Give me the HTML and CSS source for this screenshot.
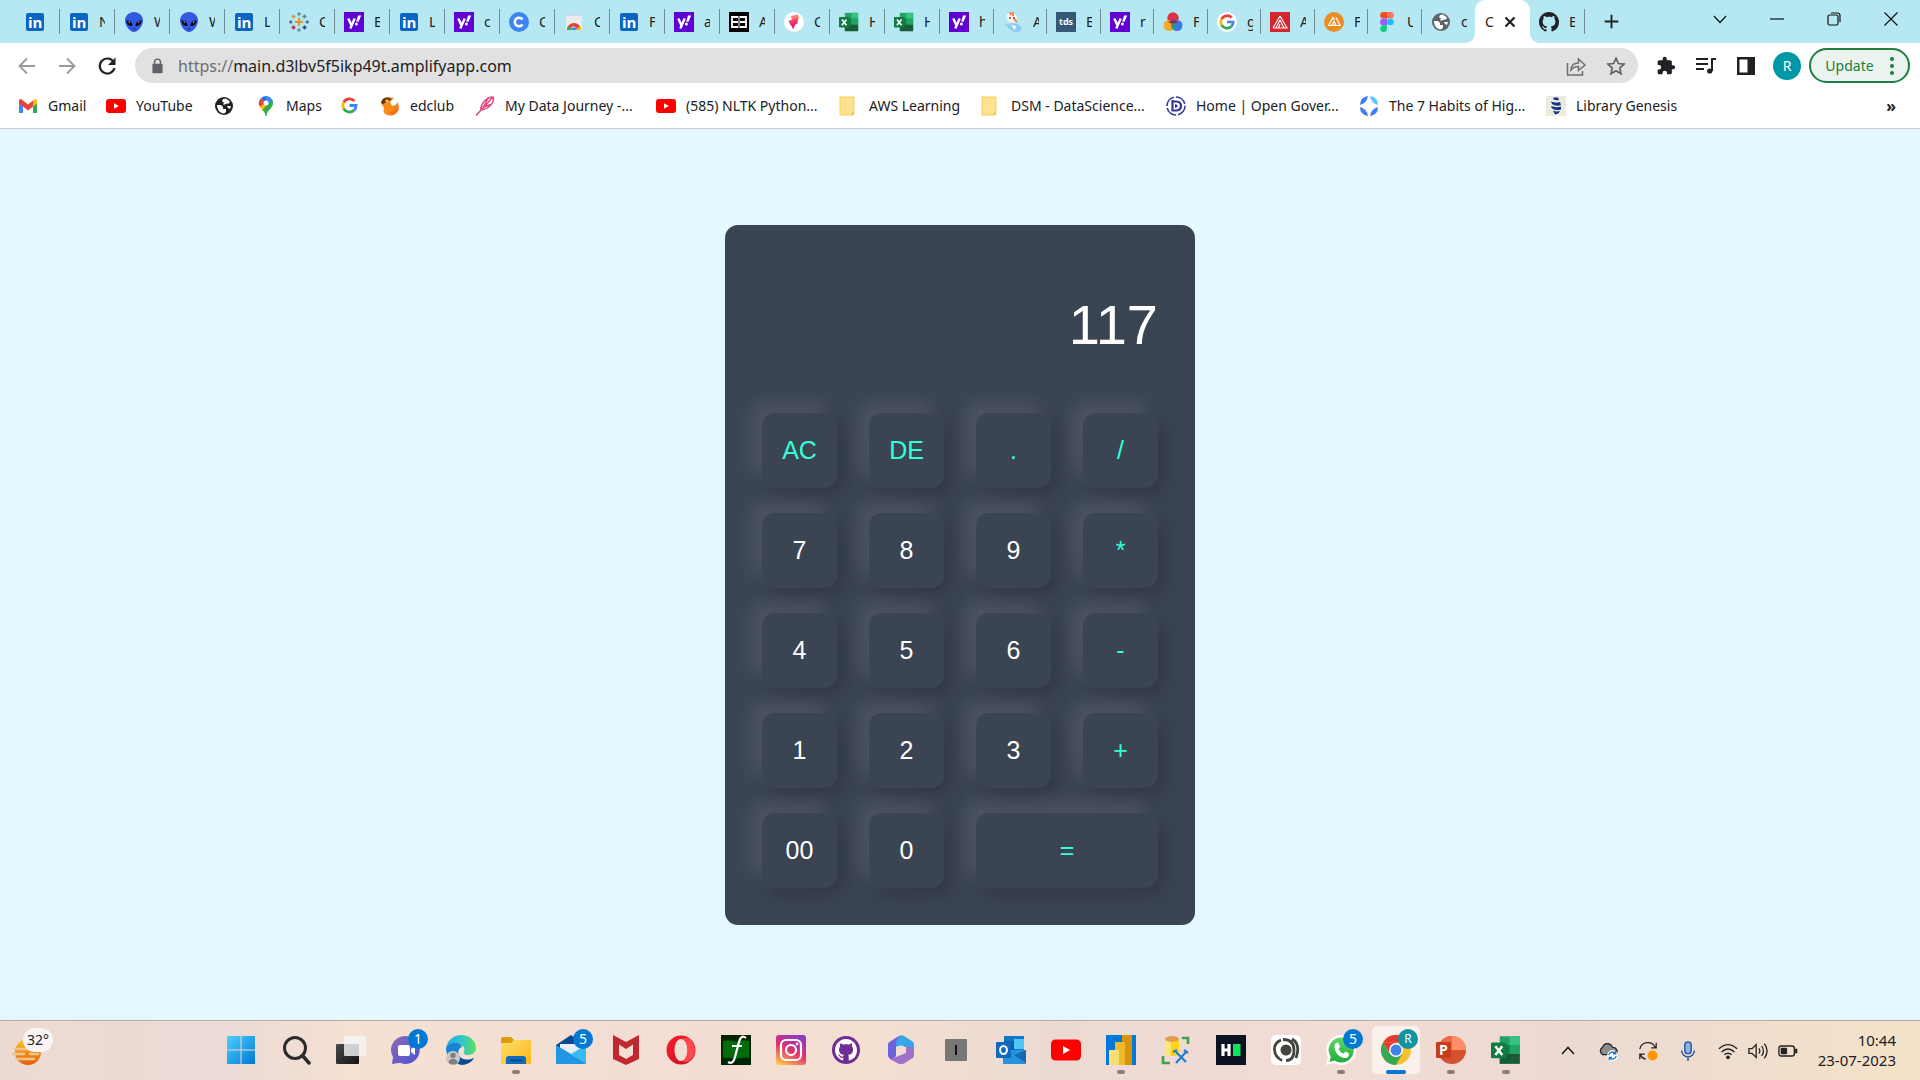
FILE: index.html
```html
<!DOCTYPE html>
<html lang="en">
<head>
<meta charset="utf-8">
<title>Calculator</title>
<link rel="stylesheet" href="styles.css">
</head>
<body>
<svg class="sprite" aria-hidden="true">
  <defs>
    <linearGradient id="sky" x1="0" y1="0" x2="1" y2="1"><stop offset="0" stop-color="#4cd0ff"/><stop offset="1" stop-color="#0078d4"/></linearGradient>
    <linearGradient id="violet" x1="0" y1="0" x2="1" y2="1"><stop offset="0" stop-color="#8c6bb8"/><stop offset="1" stop-color="#4a52d0"/></linearGradient>
    <linearGradient id="gold" x1="0" y1="0" x2="1" y2="1"><stop offset="0" stop-color="#ffdf6b"/><stop offset="1" stop-color="#fbb614"/></linearGradient>
    <linearGradient id="edge" x1="0" y1="0" x2="1" y2="0"><stop offset="0" stop-color="#2aa7e0"/><stop offset=".5" stop-color="#2fc3d0"/><stop offset="1" stop-color="#60e05a"/></linearGradient>
    <linearGradient id="insta" x1="0.7" y1="0" x2="0.2" y2="1"><stop offset="0" stop-color="#8a3ac8"/><stop offset=".5" stop-color="#e1306c"/><stop offset="1" stop-color="#fdc34b"/></linearGradient>
    <linearGradient id="opera" x1="0" y1="0" x2="1" y2="1"><stop offset="0" stop-color="#ff1b2d"/><stop offset="1" stop-color="#c4101c"/></linearGradient>
    <linearGradient id="sun" x1="0" y1="0" x2="0" y2="1"><stop offset="0" stop-color="#ffc928"/><stop offset="1" stop-color="#e8590c"/></linearGradient>
    <linearGradient id="wa" x1="0" y1="0" x2="0" y2="1"><stop offset="0" stop-color="#60d66a"/><stop offset="1" stop-color="#1faf38"/></linearGradient>
    <linearGradient id="dark" x1="0" y1="0" x2="1" y2="1"><stop offset="0" stop-color="#4a4a4a"/><stop offset="1" stop-color="#141414"/></linearGradient>
  </defs>
  <symbol id="linkedin" viewBox="0 0 20 20"><rect x="1" y="1" width="18" height="18" rx="2" fill="#0a66c2"/><text x="3" y="16" class="mark" font-size="15" fill="#fff">in</text></symbol>
  <symbol id="alien" viewBox="0 0 20 20"><path d="M10 0c5 0 9 4 9 8.500C19 14 14 20 10 20S1 14 1 8.500C1 4 5 0 10 0z" fill="#3358e4"/><path d="M2.500 8.500c3-.5 6 1.500 6 5.500-3.500.3-6-2-6-5.500zM17.500 8.500c-3-.5-6 1.500-6 5.500 3.500.3 6-2 6-5.500z" fill="#05060c"/><path d="M4.500 9.800l1.500.6M14 10.400l1.500-.6" stroke="#dde" stroke-width="1"/><path d="M8.500 17h3" stroke="#1a2a90"/></symbol>
  <symbol id="tableau" viewBox="0 0 20 20" fill="none" stroke-width="1.600"><path d="M10 6v8M6 10h8" stroke="#eb912c" stroke-width="2"/><path d="M10 0v4M8 2h4M10 16v4M8 18h4" stroke="#7099a6"/><path d="M0 10h3.500M1.700 8.200v3.600M16.500 10H20M18.300 8.200v3.600" stroke="#5b6591" stroke-width="1.300"/><path d="M4.500 2.500v4M2.500 4.500h4" stroke="#eb912c"/><path d="M15.500 2.500v4M13.500 4.500h4" stroke="#59879b"/><path d="M4.500 13.500v4M2.500 15.500h4" stroke="#c72035"/><path d="M15.500 13.500v4M13.500 15.500h4" stroke="#1f447e"/></symbol>
  <symbol id="yahoo" viewBox="0 0 20 20"><rect width="20" height="20" fill="#5f01d1"/><path d="M4.300 6.500l3 6.500M10.700 6.500L6.300 16.500" stroke="#fff" stroke-width="2.400" fill="none"/><path d="M14 3.500h3.200l-2.600 6.300h-2.400z" fill="#fff"/><circle cx="12.400" cy="12" r="1.500" fill="#fff"/></symbol>
  <symbol id="coursera" viewBox="0 0 20 20"><circle cx="10" cy="10" r="10" fill="#3c85f5"/><path d="M13.600 7.500A4.300 4.300 0 1 0 13.600 12.500" fill="none" stroke="#fff" stroke-width="2.600"/></symbol>
  <symbol id="store" viewBox="0 0 20 20"><path d="M7 4V2h6v2" fill="none" stroke="#cfd3d8" stroke-width="1.500"/><path d="M2 4h16v14H2z" fill="#e9ebee"/><path d="M3 18a7 7 0 0 1 14 0h-3l-4-4z" fill="#ea4335"/><path d="M3 18a7 7 0 0 1 1-4l5 4z" fill="#34a853"/><path d="M12 18l4-4a7 7 0 0 1 1 4z" fill="#fbbc05"/><path d="M7.300 18a2.700 2.700 0 0 1 5.400 0z" fill="#4285f4"/></symbol>
  <symbol id="e3" viewBox="0 0 20 20"><rect width="20" height="20" fill="#000"/><path d="M9 5H3v10h6M3 10h6M11 5h6v10h-6M11 10h6" stroke="#fff" stroke-width="1.800" fill="none"/><path d="M10 4v12" stroke="#fff" stroke-width="1"/></symbol>
  <symbol id="flame" viewBox="0 0 20 20"><circle cx="10" cy="10" r="10" fill="#fff"/><path d="M7 4l7-1.500 1 4L8 9z" fill="#ff7f6e"/><path d="M4.500 9L14 6l-.5 5.500L7 14z" fill="#f2366e"/><path d="M7 12l5-1-3 6.500z" fill="#e31c79"/></symbol>
  <symbol id="excel" viewBox="0 0 24 24"><path d="M7 1h16v22H7z" fill="#21a366"/><path d="M15 1h8v7h-8z" fill="#33c481"/><path d="M7 8h8v7H7z" fill="#107c41"/><path d="M7 15h16v8H7z" fill="#185c37"/><path d="M15 8h8v7h-8z" fill="#21a366"/><rect y="6" width="12.500" height="12.500" rx="1" fill="#107c41"/><path d="M3.500 9l5.500 7M9 9l-5.500 7" stroke="#fff" stroke-width="2"/></symbol>
  <symbol id="cartoon" viewBox="0 0 20 20"><path d="M1 11l4 2 3-2 7 1 4 4-3 4h-5l-5-3z" fill="#8ccdf2"/><path d="M3 3l3-2 2 2 3-2 3 3-1 6-4 1-4-2z" fill="#f7f3ea"/><path d="M7 0l1 3M10 0v4M11 7l3 3" stroke="#ee6b2f" stroke-width="1.500"/><circle cx="7" cy="6" r="1" fill="#a33"/><circle cx="11" cy="6" r="1" fill="#a33"/><path d="M8 13l5 1-1 4z" fill="#fff"/></symbol>
  <symbol id="tds" viewBox="0 0 20 20"><rect width="20" height="20" fill="#355876"/><text x="3" y="13" class="mark" font-size="9" fill="#fff">tds</text></symbol>
  <symbol id="balls" viewBox="0 0 20 20"><circle cx="10" cy="6" r="5.700" fill="#d8334a"/><circle cx="6.200" cy="13.500" r="5.500" fill="#f7a928"/><circle cx="14" cy="13.500" r="5.500" fill="#3b78e7"/><path d="M10 9.500a5.500 5.500 0 0 1 0 8 5.500 5.500 0 0 1 0-8z" fill="#2f9e50"/><path d="M5 10q5-4 10 0-5 3-10 0" fill="#8a2c5c"/></symbol>
  <symbol id="google" viewBox="0 0 20 20" fill="none" stroke-width="3.400"><path d="M15.800 4.600A7.800 7.800 0 0 0 3.200 6.400" stroke="#ea4335"/><path d="M3.200 6.400a7.800 7.800 0 0 0 0 7.200" stroke="#fbbc05"/><path d="M3.200 13.600a7.800 7.800 0 0 0 12 2.200" stroke="#34a853"/><path d="M15.200 15.800A7.800 7.800 0 0 0 17.700 10H10" stroke="#4285f4"/></symbol>
  <symbol id="googledisc" viewBox="0 0 20 20"><circle cx="10" cy="10" r="10" fill="#fff"/><use href="#google" x="2" y="2" width="16" height="16"/></symbol>
  <symbol id="redtri" viewBox="0 0 20 20"><rect width="20" height="20" fill="#d4262e"/><path d="M10 4L3 16M10 4l7 12H3M10 8l-4 8M10 8l4 8M10 12l-1.500 4" stroke="#fff" stroke-width="1.100" fill="none"/></symbol>
  <symbol id="amplify" viewBox="0 0 20 20"><circle cx="10" cy="10" r="10" fill="#ee8d24"/><path d="M4.500 13.500l4.500-8 1.500 2.500M12 5.500l4 8H4.500M8 13l2-3.500 2 3.500z" stroke="#fff" stroke-width="1.200" fill="none"/></symbol>
  <symbol id="figma" viewBox="0 0 20 20"><path d="M6.500 0H10v6.600H6.500a3.300 3.300 0 0 1 0-6.600z" fill="#f24e1e"/><path d="M10 0h3.500a3.300 3.300 0 0 1 0 6.600H10z" fill="#ff7262"/><path d="M6.500 6.600H10v6.700H6.500a3.300 3.300 0 0 1 0-6.700z" fill="#a259ff"/><circle cx="13.400" cy="10" r="3.300" fill="#1abcfe"/><path d="M6.500 13.300H10v3.300a3.400 3.400 0 1 1-3.500-3.300z" fill="#0acf83"/></symbol>
  <symbol id="globe" viewBox="0 0 20 20"><circle cx="10" cy="10" r="9" fill="currentColor"/><path d="M3 9h4l2 2v2h3v3l-2 1.500C6 17 3 14 3 9zM9 3l3-.5 4 3-1 2h-2l-2 1H9l1-2-2-1zM13 10h4l-1 3-2-1z" class="land"/></symbol>
  <symbol id="github" viewBox="0 0 16 16"><path fill="currentColor" d="M8 0C3.580 0 0 3.580 0 8c0 3.540 2.290 6.530 5.470 7.590.4.070.55-.17.55-.38 0-.19-.01-.82-.01-1.490-2.010.37-2.530-.49-2.690-.94-.09-.23-.48-.94-.82-1.130-.28-.15-.68-.52-.01-.53.63-.01 1.080.58 1.230.82.72 1.210 1.870.87 2.330.66.07-.52.28-.87.51-1.070-1.780-.2-3.640-.89-3.640-3.950 0-.87.31-1.590.82-2.150-.08-.2-.36-1.020.08-2.120 0 0 .67-.21 2.200.82.64-.18 1.320-.27 2-.27s1.360.09 2 .27c1.530-1.040 2.200-.82 2.200-.82.44 1.100.16 1.920.08 2.120.51.56.82 1.270.82 2.150 0 3.070-1.870 3.750-3.650 3.950.29.25.54.73.54 1.480 0 1.070-.01 1.930-.01 2.200 0 .21.15.46.55.38A8.010 8.010 0 0 0 16 8c0-4.420-3.580-8-8-8z"/></symbol>
  <symbol id="cross" viewBox="0 0 20 20"><path d="M5.500 5.500l9 9M14.500 5.500l-9 9" stroke="currentColor" stroke-width="2.200"/></symbol>
  <symbol id="plus" viewBox="0 0 20 20"><path d="M10 2v16M2 10h16" stroke="currentColor" stroke-width="2.200"/></symbol>
  <symbol id="back" viewBox="0 0 20 20" fill="none" stroke="#9a9a9a" stroke-width="1.800"><path d="M18 10H3M10 2.500L2.500 10l7.500 7.500"/></symbol>
  <symbol id="forward" viewBox="0 0 20 20" fill="none" stroke="#9a9a9a" stroke-width="1.800"><path d="M2 10h15M10 2.500l7.500 7.500-7.500 7.500"/></symbol>
  <symbol id="reload" viewBox="0 0 20 20"><path d="M16.500 5.800A7.500 7.500 0 1 0 17.500 12" fill="none" stroke="#202124" stroke-width="2.200"/><path d="M18.500 1.500V9H11z" fill="#202124"/></symbol>
  <symbol id="lock" viewBox="0 0 20 20"><rect x="4" y="8" width="12" height="11" rx="1" fill="#5f6368"/><path d="M6.500 9V6a3.500 3.500 0 0 1 7 0v3" fill="none" stroke="#5f6368" stroke-width="1.700"/></symbol>
  <symbol id="share" viewBox="0 0 20 20" fill="none" stroke="#6b6e72" stroke-width="1.500"><path d="M1.500 7v12h15v-4M5 14c.3-5 3-7 7.500-7V3l6.500 6-6.500 5.500v-4C9 10.500 7 11.500 5 14z"/></symbol>
  <symbol id="star" viewBox="0 0 20 20" fill="none" stroke="#5f6368" stroke-width="1.700"><path d="M10 2.200l2.400 5.300 5.700.6-4.300 3.900 1.200 5.700-5-2.900-5 2.900L6.200 12 1.900 8.100l5.700-.6z"/></symbol>
  <symbol id="puzzle" viewBox="0 0 24 24"><path fill="#202124" d="M20.500 11H19V7c0-1.100-.9-2-2-2h-4V3.500a2.500 2.500 0 0 0-5 0V5H4c-1.100 0-2 .9-2 2v3.800h1.500a2.700 2.700 0 0 1 0 5.400H2V20c0 1.100.9 2 2 2h3.800v-1.500a2.700 2.700 0 0 1 5.400 0V22H17c1.100 0 2-.9 2-2v-4h1.500a2.500 2.500 0 0 0 0-5z"/></symbol>
  <symbol id="playlist" viewBox="0 0 20 20" fill="none" stroke="#202124" stroke-width="2"><path d="M0 3h12M0 8h12M0 13h8M20 3h-4v12"/><circle cx="13.700" cy="15" r="2.600" fill="#202124" stroke="none"/></symbol>
  <symbol id="panel" viewBox="0 0 20 20"><path d="M1 1h18v18H1z" fill="#202124"/><path d="M3.500 3.500h8v13h-8z" fill="#fff"/></symbol>
  <symbol id="winmax" viewBox="0 0 14 14" fill="none" stroke="#111" stroke-width="1.200"><rect x="1" y="3" width="10" height="10" rx="1.500"/><path d="M4 1h6.500A2.500 2.500 0 0 1 13 3.500V10"/></symbol>
  <symbol id="winmin" viewBox="0 0 14 14"><path d="M0 7h14" stroke="#111" stroke-width="1.200"/></symbol>
  <symbol id="winclose" viewBox="0 0 14 14"><path d="M.5.5l13 13M13.500.5l-13 13" stroke="#111" stroke-width="1.200"/></symbol>
  <symbol id="chevdown" viewBox="0 0 14 14"><path d="M1 4l6 6.500L13 4" stroke="#111" stroke-width="1.200" fill="none"/></symbol>
  <symbol id="chevup" viewBox="0 0 14 14"><path d="M1 10l6-6.500L13 10" stroke="#222" stroke-width="1.600" fill="none"/></symbol>
  <symbol id="gmail" viewBox="0 0 20 20"><path d="M1 4.500v12.500h4V8.500z" fill="#4285f4"/><path d="M19 4.500v12.500h-4V8.500z" fill="#34a853"/><path d="M15 4.500l2-1.500q2 0 2 2v2.500l-4 3z" fill="#fbbc04"/><path d="M1 5q0-2 2-2l7 5.500L15 4.500v6l-5 4-5-4L1 7.500z" fill="#ea4335"/></symbol>
  <symbol id="youtube" viewBox="0 0 20 20"><rect y="3" width="20" height="14" rx="3" fill="#f00"/><path d="M8 7.300v5.400l4.800-2.700z" fill="#fff"/></symbol>
  <symbol id="maps" viewBox="0 0 20 20"><path d="M10 0a7 7 0 0 1 7 7H10z" fill="#4285f4"/><path d="M10 0a7 7 0 0 0-5.500 2.700L10 7z" fill="#1a73e8"/><path d="M4.500 2.700A7 7 0 0 0 4 11l6-4z" fill="#ea4335"/><path d="M4 10.500l6-3.500 2 3-5.300 5z" fill="#fbbc04"/><path d="M17 7c0 6-6 6-6.500 13h-1C9.400 17 8 15.500 6.500 14L12 7.500l4-4A7 7 0 0 1 17 7z" fill="#34a853"/><circle cx="10" cy="7" r="2.500" fill="#fff"/></symbol>
  <symbol id="edclub" viewBox="0 0 20 20"><path d="M1 7Q2 1 8 1l6 1-4 4 2 4q6-1 5-5 5 10-3 14-6 2-10-2-1-2 0-5z" fill="#f98a1c"/><path d="M1 7Q2 2 7 1.500L12 3 9 5 3 8z" fill="#5a351a"/><circle cx="7" cy="5" r="1.800" fill="#ffb03a"/><path d="M9 16q6 0 8-6 2 6-4 9z" fill="#fb6a1a"/></symbol>
  <symbol id="feather" viewBox="0 0 20 20" fill="none" stroke="#e8467c" stroke-width="1.500"><path d="M1 19.500L18 1M6 14C5 8 12 1 18 1c2 4-3 12-12 13zM8 12l5-10M9 11l8-3"/></symbol>
  <symbol id="note" viewBox="0 0 20 20"><path d="M1 1h14v13l-1 5H1z" fill="#fde293" stroke="#f9cf4f"/><path d="M12 19l3-5v4q-1 1-3 1z" fill="#f6bf26"/></symbol>
  <symbol id="dgov" viewBox="0 0 20 20"><circle cx="10" cy="10" r="9" fill="none" stroke="#35379b" stroke-width="1.600" stroke-dasharray="12 2"/><path d="M5.500 5h1v10M6.500 5.500h4q4.500.5 4.500 4.500t-4.500 4.500h-4z" fill="none" stroke="#35379b" stroke-width="2.200"/><path d="M9 8v4l2.500-1V9z" fill="#35379b"/></symbol>
  <symbol id="habits" viewBox="0 0 20 20"><path d="M9 0Q8 7 1 9q0-8 8-9zM11 20q1-7 8-9 0 8-8 9zM1 11q7 2 8 9-8-1-8-9z" fill="#3f7dfa"/><path d="M11 0q1 7 8 9 0-8-8-9z" fill="#5ec3ff"/></symbol>
  <symbol id="libgen" viewBox="0 0 20 20"><rect width="20" height="20" fill="#ecebdd"/><path d="M8 1.500h4l1 2.500q-3 1-6-1zM5 5.500q5 2 9 0.500l1 3q-5 2-9-1zM5 10q5 2 10 .5v3q-5 1.500-9-1zM7 14.500q3 1.500 7 .5-1 3-5 3.500z" fill="#12358b"/></symbol>
  <symbol id="weather" viewBox="0 0 30 30"><circle cx="16" cy="16" r="13" fill="url(#sun)"/><path d="M3 13h16M1 18h11M18 18h8M4 23h18" stroke="#e9c690" stroke-width="2.400" stroke-linecap="round"/></symbol>
  <symbol id="windows" viewBox="0 0 30 30"><path d="M1 1h13.500v13.500H1zM15.500 1H29v13.500H15.500zM1 15.500h13.500V29H1zM15.500 15.500H29V29H15.500z" fill="url(#sky)"/></symbol>
  <symbol id="search" viewBox="0 0 30 30" fill="none" stroke="#2b2b2b"><circle cx="14" cy="13" r="10.500" stroke-width="3"/><path d="M21.500 20.500l6.500 7.500" stroke-width="3.500" stroke-linecap="round"/></symbol>
  <symbol id="taskview" viewBox="0 0 30 30"><rect y="9" width="23" height="20" rx="1" fill="url(#dark)"/><rect x="8" y="1" width="22" height="20" rx="1" fill="#f4f4f4" opacity=".82"/></symbol>
  <symbol id="chat" viewBox="0 0 30 30"><path d="M15 1a14 14 0 1 1-6 26.800L1 29l1-7A14 14 0 0 1 15 1z" fill="url(#violet)"/><rect x="7" y="10" width="12" height="11" rx="2" fill="#fff"/><path d="M20 14l4-3v9l-4-3z" fill="#fff"/></symbol>
  <symbol id="edgeicon" viewBox="0 0 30 30"><path d="M0 14C1 5 8 0 15 0c9 0 15 6 15 13 0 5-4 7-8 7-3 0-5-1-4-3 3-7-8-12-18-3z" fill="url(#edge)"/><path d="M0 13c4-7 15-6 16-1-4 1-6 8 0 12 5 3 10 0 12-1-4 6-13 8-20 4-6-4-8-9-8-14z" fill="#1683d4"/><path d="M12 16c-1 7 8 11 16 7-2 4-7 7-13 7-7-2-8-9-3-14z" fill="#0d4a92"/><circle cx="7" cy="23" r="7" fill="#c9c9c9"/><circle cx="7" cy="20.500" r="2.700" fill="#7e7e7e"/><path d="M2.500 28q0-4 4.500-4t4.500 4q-4 3-9 0z" fill="#7e7e7e"/></symbol>
  <symbol id="explorer" viewBox="0 0 30 30"><path d="M0 4q0-2 2-2h8l3 3-2 4H0z" fill="#dd9b0c"/><path d="M0 8h10l3-3h17v24H0z" fill="url(#gold)"/><path d="M5 29v-5q0-3 3-3h14q3 0 3 3v5z" fill="#0f6cbd"/><path d="M9 25.500h12" stroke="#063f73" stroke-width="1.500"/></symbol>
  <symbol id="mail" viewBox="0 0 30 30"><path d="M0 10L15 0l15 10v6H0z" fill="#0b4a8f"/><path d="M4 9h22v12H4z" fill="#e8eef4"/><path d="M0 10l30 18q0 1-1 1H1q-1 0-1-1z" fill="#1f97e4"/><path d="M30 10v18L15 19z" fill="#35bdf2"/></symbol>
  <symbol id="mcafee" viewBox="0 0 30 30"><path d="M2 0l13 7L28 0v24l-13 6-13-6zM8 9.500V20l7 4 7-4V9.500L15 14z" fill="#c0282f" fill-rule="evenodd"/></symbol>
  <symbol id="operaicon" viewBox="0 0 30 30"><path fill-rule="evenodd" d="M15 .5a14.500 14.500 0 1 1 0 29 14.500 14.500 0 0 1 0-29zm0 3.500c-4 0-6.500 5-6.500 11S11 26 15 26s6.500-5 6.500-11S19 4 15 4z" fill="url(#opera)"/><path d="M15 4c8-4 14 4 14 11s-6 15-14 11c4 0 6.500-5 6.500-11S19 4 15 4z" fill="#ff4a4d"/></symbol>
  <symbol id="ffile" viewBox="0 0 30 30"><rect width="30" height="30" fill="#012401"/><path d="M2 6q7-2 13 1 6-3 13-1v17q-7-1-13 1-6-2-13-1z" fill="#046b0b"/><path d="M25 3q-5-4-7 4l-4 15q-2 8-7 5M11 11h10" stroke="#fff" stroke-width="2.200" fill="none"/></symbol>
  <symbol id="instagram" viewBox="0 0 30 30"><rect width="30" height="30" rx="3" fill="url(#insta)"/><g fill="none" stroke="#fff" stroke-width="2.200"><rect x="5" y="5" width="20" height="20" rx="5"/><circle cx="15" cy="15" r="5"/></g><circle cx="21" cy="9" r="1.400" fill="#fff"/></symbol>
  <symbol id="ghpurple" viewBox="0 0 30 30"><circle cx="15" cy="15" r="14" fill="#6e2d96"/><circle cx="15" cy="15" r="10.500" fill="#6e2d96"/><g color="#fff"><use href="#github" x="4" y="4" width="22" height="22"/></g></symbol>
  <symbol id="m365" viewBox="0 0 30 30"><path d="M13 1q3-1 5 0l-5 8-3 3v9l-4 4q-4-2-4-5V10q0-3 3-4z" fill="#6c62d9"/><path d="M13 1q2-1 5 0l8 5q2 1 2 4v8l-8-3v-3l-10-1V7z" fill="#35a6e6"/><path d="M28 14v6q0 3-3 4l-7 4.500q-3 1-6 0L4 24l6-2 10-4v-7z" fill="#a070c8"/><circle cx="15" cy="15" r="4.500" fill="#f0dcd4"/></symbol>
  <symbol id="ibox" viewBox="0 0 30 30"><rect x="4" y="4" width="22" height="22" rx="1" fill="#777"/><path d="M15 10v10" stroke="#111" stroke-width="2"/></symbol>
  <symbol id="outlook" viewBox="0 0 30 30"><path d="M8 1h20v18H8z" fill="#1377c9"/><path d="M18 4h10v10H18z" fill="#50c8f4"/><path d="M8 6h10v9H8z" fill="#0f5fb0"/><path d="M7 15l23 0v14H7z" fill="#2593df"/><path d="M30 15v13L18 20z" fill="#1667b4"/><rect y="7" width="15" height="16" rx="1" fill="#0f69bd"/><ellipse cx="7.500" cy="15" rx="3.400" ry="4" fill="none" stroke="#fff" stroke-width="2"/></symbol>
  <symbol id="powerbi" viewBox="0 0 30 30"><rect width="30" height="30" fill="#0078d7"/><path d="M16 0h10v30H16z" fill="#d8940f"/><path d="M9 8q0-1 1-1h9v23H9z" fill="#eebb2c"/><path d="M3 16q0-1 1-1h9v15H3z" fill="#f9de76"/></symbol>
  <symbol id="dbtools" viewBox="0 0 30 30"><path d="M4 4v14q0 3 7 3t7-3V4z" fill="#ffd21c"/><path d="M4 4h6v17q-6 0-6-3z" fill="#ffe574"/><ellipse cx="11" cy="4" rx="7" ry="3" fill="#e3a055"/><path d="M21 3h6v6M2 21v7h7" stroke="#43a047" stroke-width="2.600" fill="none"/><path d="M15 17l10 10M15 28l10-11M12 17l4-2M23 15l4 3" stroke="#1d7fd0" stroke-width="2.200" fill="none"/></symbol>
  <symbol id="hblock" viewBox="0 0 30 30"><rect width="30" height="30" fill="#0b1220"/><path d="M7 9v12M13 9v12M7 15h6" stroke="#fff" stroke-width="3.200"/><path d="M17 9h7.500v12H17z" fill="#0be45d"/></symbol>
  <symbol id="ring" viewBox="0 0 30 30"><rect width="30" height="30" rx="5" fill="#fff"/><circle cx="15" cy="15" r="5.500" fill="#46443f"/><path d="M10 5Q3 8 3.500 15T11 25.500M12 4.500q11 0 11 10.500T15 25.500M21 4q9 5 4 19" fill="none" stroke="#46443f" stroke-width="2.800"/></symbol>
  <symbol id="whatsapp" viewBox="0 0 30 30"><path d="M15 0a15 15 0 1 1-7 28L0 30l2-8A15 15 0 0 1 15 0z" fill="#fff"/><path d="M15 2.500A12.500 12.500 0 1 1 8.500 25.500L3.500 27l1.300-5A12.500 12.500 0 0 1 15 2.500z" fill="url(#wa)"/><path d="M9 9q2-3 4 0l1 3-1.500 2q2 4 5 4.500l2-2 3.500 2q0 5-5 4.500C12 22 7 15 9 9z" fill="#fff"/></symbol>
  <symbol id="chrome" viewBox="0 0 30 30"><circle cx="15" cy="15" r="15" fill="#fbc02d"/><path d="M2 7.500A15 15 0 0 1 28 7.500H15z" fill="#e53935"/><path d="M2 7.500A15 15 0 0 0 15 30l6.500-11.500L8 18z" fill="#34a853"/><path d="M2 7.500L9 19l6-11.500z" fill="#e53935"/><circle cx="15" cy="15" r="7" fill="#fff"/><circle cx="15" cy="15" r="5.500" fill="#3f83f0"/></symbol>
  <symbol id="ppt" viewBox="0 0 30 30"><circle cx="16" cy="15" r="14" fill="#d35230"/><path d="M16 1a14 14 0 0 1 14 14H16z" fill="#ff8f6b"/><path d="M16 1v14H2A14 14 0 0 1 16 1z" fill="#ed6c47"/><rect y="7" width="15" height="16" rx="1" fill="#c43e1c"/><text x="3" y="20" class="mark" font-size="14" fill="#fff">P</text></symbol>
  <symbol id="cloud" viewBox="0 0 22 22"><path d="M5 15a4.500 4.500 0 0 1 0-8Q7 2 11.500 3 15 4 16 7q4 0 5 4 0 3-3 4z" fill="#8c8c8c" stroke="#222" stroke-width="1.400"/><circle cx="16" cy="16" r="6" fill="#fff"/><path d="M12 15.500a4 4 0 0 1 7-2M20 16.500a4 4 0 0 1-7 2M19.500 11v3h-3M12.500 21v-3h3" fill="none" stroke="#1971c2" stroke-width="1.500"/></symbol>
  <symbol id="sync" viewBox="0 0 22 22"><path d="M2 9a9 9 0 0 1 17-2M20 2v5.500h-5.500M2 20v-5.500h5.500M2.500 15a9 9 0 0 0 6 5" fill="none" stroke="#222" stroke-width="1.400"/><circle cx="16" cy="16" r="5.500" fill="#ff9500"/></symbol>
  <symbol id="mic" viewBox="0 0 22 22" fill="none" stroke="#1d4f9c" stroke-width="1.500"><rect x="7.500" y="1" width="7" height="13" rx="3.500" fill="#8bb4e6"/><path d="M4 10.500a7 7 0 0 0 14 0M11 17.500V22"/></symbol>
  <symbol id="wifi" viewBox="0 0 22 22" fill="none" stroke="#222" stroke-width="1.500"><path d="M1 8.500q10-9 20 0M4 12q7-6.500 14 0M7 15.200q4-3.600 8 0"/><circle cx="11" cy="18" r="1.300" fill="#222"/></symbol>
  <symbol id="volume" viewBox="0 0 22 22" fill="none" stroke="#222" stroke-width="1.400"><path d="M1 8.500h3.500L9 4v14l-4.500-4.500H1zM12 8q2 3 0 6M15 5.500q4 5.500 0 11M18 3q6 8 0 16"/></symbol>
  <symbol id="battery" viewBox="0 0 22 22"><rect x="1" y="5.500" width="17" height="11" rx="2.500" fill="none" stroke="#222" stroke-width="1.500"/><rect x="3" y="7.500" width="7" height="7" rx="1" fill="#222"/><path d="M20 8.500v5" stroke="#222" stroke-width="2.400"/></symbol>
</svg>

<header class="browser">
  <div class="tabstrip">
    <nav class="tabs" aria-label="Open tabs">
      <button class="tab first"><svg class="icon"><use href="#linkedin"/></svg></button>
      <button class="tab"><svg class="icon"><use href="#linkedin"/></svg><span>N</span></button>
      <button class="tab"><svg class="icon"><use href="#alien"/></svg><span>W</span></button>
      <button class="tab"><svg class="icon"><use href="#alien"/></svg><span>W</span></button>
      <button class="tab"><svg class="icon"><use href="#linkedin"/></svg><span>L</span></button>
      <button class="tab"><svg class="icon"><use href="#tableau"/></svg><span>C</span></button>
      <button class="tab"><svg class="icon"><use href="#yahoo"/></svg><span>E</span></button>
      <button class="tab"><svg class="icon"><use href="#linkedin"/></svg><span>L</span></button>
      <button class="tab"><svg class="icon"><use href="#yahoo"/></svg><span>c</span></button>
      <button class="tab"><svg class="icon"><use href="#coursera"/></svg><span>C</span></button>
      <button class="tab"><svg class="icon"><use href="#store"/></svg><span>C</span></button>
      <button class="tab"><svg class="icon"><use href="#linkedin"/></svg><span>F</span></button>
      <button class="tab"><svg class="icon"><use href="#yahoo"/></svg><span>a</span></button>
      <button class="tab"><svg class="icon"><use href="#e3"/></svg><span>A</span></button>
      <button class="tab"><svg class="icon"><use href="#flame"/></svg><span>C</span></button>
      <button class="tab"><svg class="icon"><use href="#excel"/></svg><span>H</span></button>
      <button class="tab"><svg class="icon"><use href="#excel"/></svg><span>H</span></button>
      <button class="tab late"><svg class="icon"><use href="#yahoo"/></svg><span>h</span></button>
      <button class="tab late"><svg class="icon"><use href="#cartoon"/></svg><span>A</span></button>
      <button class="tab late"><svg class="icon"><use href="#tds"/></svg><span>E</span></button>
      <button class="tab late"><svg class="icon"><use href="#yahoo"/></svg><span>r</span></button>
      <button class="tab late"><svg class="icon"><use href="#balls"/></svg><span>F</span></button>
      <button class="tab late"><svg class="icon"><use href="#googledisc"/></svg><span>g</span></button>
      <button class="tab late"><svg class="icon"><use href="#redtri"/></svg><span>A</span></button>
      <button class="tab late"><svg class="icon"><use href="#amplify"/></svg><span>F</span></button>
      <button class="tab late"><svg class="icon"><use href="#figma"/></svg><span>U</span></button>
      <button class="tab late bare"><svg class="icon globe-tab"><use href="#globe"/></svg><span>c</span></button>
      <button class="tab active"><span>C</span><svg class="icon"><use href="#cross"/></svg></button>
      <button class="tab"><svg class="icon"><use href="#github"/></svg><span>E</span></button>
    </nav>
    <button class="newtab" aria-label="New tab"><svg class="icon small"><use href="#plus"/></svg></button>
    <div class="window-controls">
      <button aria-label="Search tabs"><svg class="glyph"><use href="#chevdown"/></svg></button>
      <button aria-label="Minimize"><svg class="glyph"><use href="#winmin"/></svg></button>
      <button aria-label="Restore"><svg class="glyph"><use href="#winmax"/></svg></button>
      <button aria-label="Close"><svg class="glyph"><use href="#winclose"/></svg></button>
    </div>
  </div>
  <div class="toolbar">
    <button aria-label="Back"><svg class="icon"><use href="#back"/></svg></button>
    <button aria-label="Forward"><svg class="icon"><use href="#forward"/></svg></button>
    <button aria-label="Reload"><svg class="icon"><use href="#reload"/></svg></button>
    <div class="omnibox">
      <svg class="icon small"><use href="#lock"/></svg>
      <label for="url">https://</label><input id="url" type="text" value="main.d3lbv5f5ikp49t.amplifyapp.com" spellcheck="false">
      <button aria-label="Share"><svg class="icon"><use href="#share"/></svg></button>
      <button aria-label="Bookmark"><svg class="icon"><use href="#star"/></svg></button>
    </div>
    <button aria-label="Extensions"><svg class="icon"><use href="#puzzle"/></svg></button>
    <button aria-label="Media"><svg class="icon"><use href="#playlist"/></svg></button>
    <button aria-label="Side panel"><svg class="icon"><use href="#panel"/></svg></button>
    <button class="avatar">R</button>
    <button class="update">Update<span class="dots"><i></i><i></i><i></i></span></button>
  </div>
  <nav class="bookmarks" aria-label="Bookmarks">
    <a href="#"><svg class="icon"><use href="#gmail"/></svg>Gmail</a>
    <a href="#"><svg class="icon"><use href="#youtube"/></svg>YouTube</a>
    <a href="#" aria-label="Site"><svg class="icon"><use href="#globe"/></svg></a>
    <a href="#"><svg class="icon"><use href="#maps"/></svg>Maps</a>
    <a href="#" aria-label="Google"><svg class="icon small"><use href="#google"/></svg></a>
    <a href="#"><svg class="icon"><use href="#edclub"/></svg>edclub</a>
    <a href="#"><svg class="icon"><use href="#feather"/></svg>My Data Journey -...</a>
    <a href="#"><svg class="icon"><use href="#youtube"/></svg>(585) NLTK Python...</a>
    <a href="#"><svg class="icon"><use href="#note"/></svg>AWS Learning</a>
    <a href="#"><svg class="icon"><use href="#note"/></svg>DSM - DataScience...</a>
    <a href="#"><svg class="icon"><use href="#dgov"/></svg>Home | Open Gover...</a>
    <a href="#"><svg class="icon"><use href="#habits"/></svg>The 7 Habits of Hig...</a>
    <a href="#"><svg class="icon"><use href="#libgen"/></svg>Library Genesis</a>
    <button class="more" aria-label="More bookmarks">»</button>
  </nav>
</header>

<main class="page">
  <form class="calculator">
    <input class="display" type="text" value="117" aria-label="Result" readonly>
    <div class="keys">
      <button type="button" class="operator">AC</button>
      <button type="button" class="operator">DE</button>
      <button type="button" class="operator">.</button>
      <button type="button" class="operator">/</button>
      <button type="button">7</button>
      <button type="button">8</button>
      <button type="button">9</button>
      <button type="button" class="operator">*</button>
      <button type="button">4</button>
      <button type="button">5</button>
      <button type="button">6</button>
      <button type="button" class="operator">-</button>
      <button type="button">1</button>
      <button type="button">2</button>
      <button type="button">3</button>
      <button type="button" class="operator">+</button>
      <button type="button">00</button>
      <button type="button">0</button>
      <button type="button" class="operator equal">=</button>
    </div>
  </form>
</main>

<footer class="taskbar">
  <button class="weather" aria-label="Weather"><svg class="app-icon"><use href="#weather"/></svg><span class="temp">32°</span></button>
  <nav class="apps" aria-label="Taskbar">
    <button class="app" aria-label="Start"><svg class="app-icon"><use href="#windows"/></svg></button>
    <button class="app" aria-label="Search"><svg class="app-icon"><use href="#search"/></svg></button>
    <button class="app" aria-label="Task view"><svg class="app-icon"><use href="#taskview"/></svg></button>
    <button class="app" aria-label="Chat"><svg class="app-icon"><use href="#chat"/></svg><span class="badge">1</span></button>
    <button class="app" aria-label="Edge"><svg class="app-icon"><use href="#edgeicon"/></svg></button>
    <button class="app running" aria-label="File Explorer"><svg class="app-icon"><use href="#explorer"/></svg></button>
    <button class="app" aria-label="Mail"><svg class="app-icon"><use href="#mail"/></svg><span class="badge">5</span></button>
    <button class="app" aria-label="McAfee"><svg class="app-icon"><use href="#mcafee"/></svg></button>
    <button class="app" aria-label="Opera"><svg class="app-icon"><use href="#operaicon"/></svg></button>
    <button class="app" aria-label="Reader"><svg class="app-icon"><use href="#ffile"/></svg></button>
    <button class="app" aria-label="Instagram"><svg class="app-icon"><use href="#instagram"/></svg></button>
    <button class="app" aria-label="GitHub Desktop"><svg class="app-icon"><use href="#ghpurple"/></svg></button>
    <button class="app" aria-label="Microsoft 365"><svg class="app-icon"><use href="#m365"/></svg></button>
    <button class="app" aria-label="App"><svg class="app-icon"><use href="#ibox"/></svg></button>
    <button class="app" aria-label="Outlook"><svg class="app-icon"><use href="#outlook"/></svg></button>
    <button class="app" aria-label="YouTube"><svg class="app-icon"><use href="#youtube"/></svg></button>
    <button class="app running" aria-label="Power BI"><svg class="app-icon"><use href="#powerbi"/></svg></button>
    <button class="app" aria-label="Database tools"><svg class="app-icon"><use href="#dbtools"/></svg></button>
    <button class="app" aria-label="HackerRank"><svg class="app-icon"><use href="#hblock"/></svg></button>
    <button class="app" aria-label="Recorder"><svg class="app-icon"><use href="#ring"/></svg></button>
    <button class="app running" aria-label="WhatsApp"><svg class="app-icon"><use href="#whatsapp"/></svg><span class="badge">5</span></button>
    <button class="app running current" aria-label="Chrome"><svg class="app-icon"><use href="#chrome"/></svg><span class="badge profile">R</span></button>
    <button class="app running" aria-label="PowerPoint"><svg class="app-icon"><use href="#ppt"/></svg></button>
    <button class="app running" aria-label="Excel"><svg class="app-icon"><use href="#excel"/></svg></button>
  </nav>
  <div class="tray">
    <button aria-label="Hidden icons"><svg class="glyph"><use href="#chevup"/></svg></button>
    <button aria-label="OneDrive"><svg class="icon"><use href="#cloud"/></svg></button>
    <button aria-label="Updates"><svg class="icon"><use href="#sync"/></svg></button>
    <button aria-label="Microphone"><svg class="icon"><use href="#mic"/></svg></button>
    <button class="status" aria-label="Network, volume and battery"><svg class="icon"><use href="#wifi"/></svg><svg class="icon"><use href="#volume"/></svg><svg class="icon"><use href="#battery"/></svg></button>
    <button class="clock"><time>10:44</time><time>23-07-2023</time></button>
  </div>
</footer>
</body>
</html>
```
FILE: styles.css
```css
* { box-sizing: border-box; }

body {
  margin: 0;
  min-height: 100vh;
  display: flex;
  flex-direction: column;
  background: #e3f9ff;
  font-family: "Noto Sans", "Open Sans", sans-serif;
  font-size: 14px;
  color: #202124;
}

button, input {
  border: 0;
  padding: 0;
  background: transparent;
  color: inherit;
  font: inherit;
}

button {
  display: flex;
  align-items: center;
  justify-content: center;
}

.sprite { position: absolute; width: 0; height: 0; }
.mark { font-family: "Open Sans", sans-serif; font-weight: 700; }
.icon { width: 20px; height: 20px; flex: none; }
.icon.small { width: 17px; height: 17px; }
.glyph { width: 14px; height: 14px; flex: none; }
.land { fill: #fff; }

/* Tab strip */
.tabstrip {
  display: flex;
  height: 43px;
  background: #b5e8f3;
}
.tabs { display: flex; }
.tab {
  position: relative;
  width: 55px;
  height: 43px;
  padding-left: 9px;
  gap: 10px;
  justify-content: flex-start;
}
.tab.late { width: 54px; }
.tab.late:nth-child(odd) { width: 53px; }
.tab.first { width: 60px; padding-left: 25px; }
.tab span {
  width: 6px;
  overflow: hidden;
  text-align: left;
}
.tab:not(.active):not(.bare)::after {
  content: "";
  position: absolute;
  right: 0;
  top: 9px;
  width: 1px;
  height: 25px;
  background: #6f8d94;
}
.globe-tab { color: #5f6368; }
.globe-tab .land { fill: #b5e8f3; }
.tab.active {
  background: #fff;
  border-radius: 10px 10px 0 0;
  padding-left: 10px;
  gap: 6px;
}
.tab.active span { width: 9px; }
.tab.active::before, .tab.active::after {
  content: "";
  position: absolute;
  bottom: 0;
  width: 10px;
  height: 10px;
}
.tab.active::before { left: -10px; background: radial-gradient(circle at 0 0, transparent 10px, #fff 10px); }
.tab.active::after { right: -10px; background: radial-gradient(circle at 100% 0, transparent 10px, #fff 10px); }
.newtab { width: 52px; }
.window-controls {
  display: flex;
  height: 37px;
  margin-left: auto;
  padding-right: 1px;
}
.window-controls button { width: 57px; }

/* Toolbar */
.toolbar {
  display: flex;
  align-items: center;
  height: 45px;
  padding: 0 10px 0 7px;
  background: #fff;
}
.toolbar button { width: 40px; height: 35px; }
.toolbar .omnibox {
  display: flex;
  flex: 1;
  align-items: center;
  height: 35px;
  margin: 0 8px;
  padding-left: 14px;
  border-radius: 18px;
  background: #e1e1e1;
  font-size: 16px;
}
.omnibox label { margin-left: 12px; color: #6b6e72; }
.omnibox input { flex: 1; min-width: 0; }
.toolbar .omnibox button:last-child { margin-right: 2px; }
.toolbar .avatar {
  width: 28px;
  height: 28px;
  margin: 0 8px 0 7px;
  border-radius: 50%;
  background: #0097a7;
  color: #fff;
}
.toolbar .update {
  width: 101px;
  gap: 16px;
  border: 2px solid #1e7e43;
  border-radius: 18px;
  background: #eaf3ee;
  color: #188038;
}
.dots { display: flex; flex-direction: column; gap: 3px; }
.dots i { width: 4px; height: 4px; border-radius: 50%; background: #188038; }

/* Bookmarks */
.bookmarks {
  display: grid;
  grid-template-columns: 88px 108px 42px 85px 39px 95px 181px 183px 142px 185px 193px 187px 1fr auto;
  align-items: center;
  height: 41px;
  padding: 0 24px 5px 18px;
  border-bottom: 1px solid #c6ccd0;
  background: #fff;
}
.bookmarks a {
  display: flex;
  align-items: center;
  gap: 10px;
  color: inherit;
  text-decoration: none;
  white-space: nowrap;
}
.more { font-weight: 700; font-size: 16px; }

/* Calculator */
.page {
  display: flex;
  flex: 1;
  align-items: center;
  justify-content: center;
  padding: 24px;
}
.calculator {
  padding: 62px 37px 37px;
  border-radius: 13px;
  background: #3b4453;
  color: #fff;
  font-family: "Liberation Sans", Arial, sans-serif;
}
.display {
  display: block;
  width: 0;
  min-width: 100%;
  height: 75px;
  margin-bottom: 51px;
  font-size: 56px;
  text-align: right;
}
.keys {
  display: grid;
  grid-template-columns: repeat(4, 75px);
  gap: 25px 32px;
}
.keys button {
  height: 75px;
  border-radius: 13px;
  font-size: 25px;
  box-shadow: -10px -10px 19px rgba(255, 255, 255, 0.1), 6px 6px 19px rgba(0, 0, 0, 0.2);
  background: #3b4453;
}
.keys .operator { color: #33ffd8; }
.keys .equal { grid-column: span 2; }

/* Taskbar */
.taskbar {
  display: flex;
  height: 60px;
  border-top: 1px solid #b9aaa6;
  background: linear-gradient(90deg, #ecdad2, #ebdad6 12%, #f5e1d2 18%, #f3ddd4 35%, #f4dfd1 45%, #ecdad2 55%, #f2dcd6 70%, #ecd9d2 82%, #f4e2c8);
}
.weather {
  position: relative;
  width: 214px;
  padding-left: 12px;
  justify-content: flex-start;
}
.temp {
  position: absolute;
  left: 23px;
  top: 7px;
  width: 30px;
  border-radius: 12px;
  background: #faf5f3;
  line-height: 24px;
}
.apps { display: flex; }
.app {
  position: relative;
  width: 48px;
  height: 48px;
  margin: 5px 4px 5px 3px;
  border-radius: 5px;
}
.app-icon { width: 30px; height: 30px; flex: none; }
.app.current { background: #faf0ec; }
.app.running::after {
  content: "";
  position: absolute;
  left: 20px;
  bottom: 0;
  width: 8px;
  height: 4px;
  border-radius: 2px;
  background: #8a7e79;
}
.app.current::after { left: 14px; width: 20px; background: #0078d4; }
.badge {
  position: absolute;
  right: 2px;
  top: 3px;
  width: 20px;
  height: 20px;
  border-radius: 50%;
  background: #0078d4;
  color: #fff;
  line-height: 20px;
}
.badge.profile { background: #1295a3; font-size: 12px; }
.tray {
  display: flex;
  margin-left: auto;
  padding-right: 24px;
}
.tray button { width: 40px; }
.tray .status { width: 90px; gap: 10px; margin-left: 5px; }
.tray .clock {
  width: 93px;
  padding-bottom: 2px;
  flex-direction: column;
  align-items: flex-end;
  font-size: 15px;
  line-height: 20px;
}
```
